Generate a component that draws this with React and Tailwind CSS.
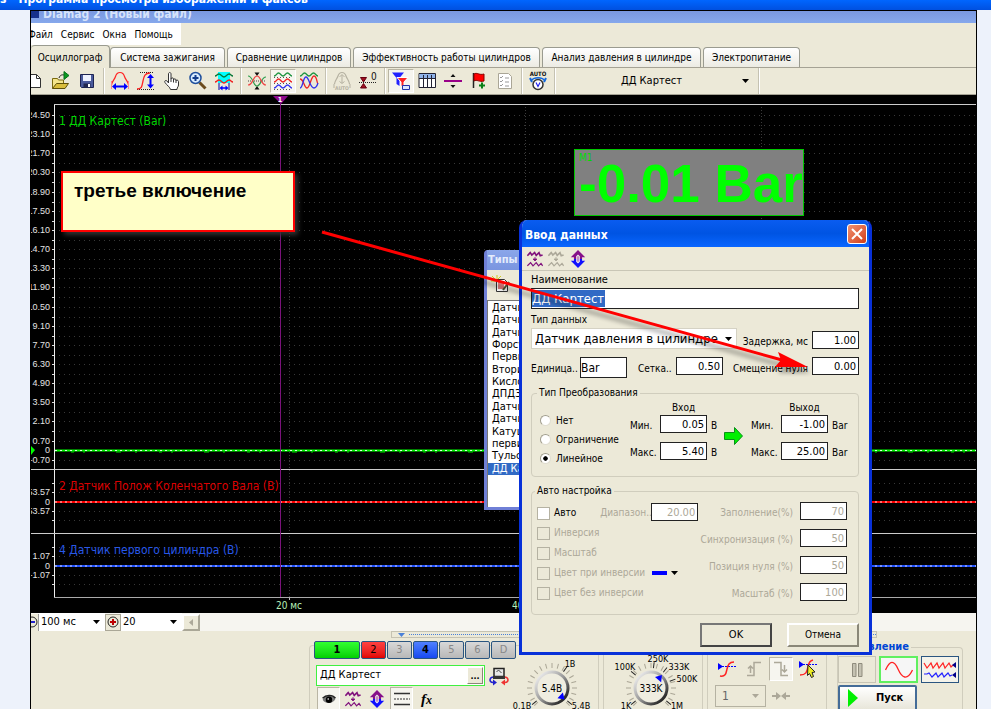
import React from 'react';

const tabs = [
  { label: 'Осциллограф', width: 'w-[79px]', active: true },
  { label: 'Система зажигания', width: 'w-[115px]' },
  { label: 'Сравнение цилиндров', width: 'w-[124px]' },
  { label: 'Эффективность работы цилиндров', width: 'w-[187px]' },
  { label: 'Анализ давления в цилиндре', width: 'w-[159px]' },
  { label: 'Электропитание', width: 'w-[97px]' },
];

const sensorTypes = [
  'Датчик давления',
  'Датчик кислорода',
  'Датчик разрежения',
  'Форсунка',
  'Первичка',
  'Вторичка',
  'Кислород',
  'ДПДЗ',
  'Датчик Холла',
  'Датчик фазы',
  'Катушка',
  'первичка',
  'Тульский',
  'ДД Картест',
];

/* ---------- toolbar drawings ---------- */

const Icon = ({ children, size = 'h-5 w-5' }) => (
  <svg viewBox="0 0 20 20" className={`${size} shrink-0`} fill="none" strokeWidth="1">
    {children}
  </svg>
);

const NewIcon = () => (
  <Icon>
    <path d="M4.5 3.5h7l4 4v9h-11z" fill="#fff" stroke="#333" />
    <path d="M11.5 3.5v4h4" stroke="#333" />
  </Icon>
);

const OpenIcon = () => (
  <Icon>
    <path d="M1.5 17.5v-10h5l1 1.500h5v3" fill="#f3e48c" stroke="#7a6a10" />
    <path d="M1.500 17.500l4-5h12l-3.500 5z" fill="#d9bd3c" stroke="#5d4f08" />
    <path d="M8 7c1-3 3-3.500 5-3" stroke="#222" />
    <path d="M13 0.500v8l5-4z" fill="#0a9a20" stroke="#06701a" />
  </Icon>
);

const SaveIcon = () => (
  <Icon>
    <path d="M3.500 3.500h13v13h-12l-1-1z" fill="#4a5a9c" stroke="#1d2452" />
    <path d="M6 4h8v6H6z" fill="#eef2ff" />
    <path d="M6.500 12.500h7v4h-7z" fill="#20264e" />
    <path d="M11 13h2v3h-2z" fill="#fff" />
  </Icon>
);

const PeriodIcon = () => (
  <Icon>
    <path d="M1.500 14C2 10 4.500 9 5.500 5.500 6.500 2 8 1.500 10 1.500s3.500.5 4.500 4C15.500 9 18 10 18.500 14" stroke="#f22" strokeWidth="1.200" />
    <path d="M1.500 10v8M18.500 10v8" stroke="#f88" />
    <path d="M4 15.500h12" stroke="#00f" strokeWidth="2" />
    <path d="M2 15.500l4-3.500v7zM18 15.500l-4-3.500v7z" fill="#00f" />
  </Icon>
);

const AmplitudeIcon = () => (
  <Icon>
    <path d="M4 1.500h14M1 18.500h17" stroke="#222" strokeDasharray="1 1" />
    <path d="M1 18c5 0 5-3 6-8s2-8 7-8" stroke="#f22" strokeWidth="1.300" />
    <path d="M14.500 5v10" stroke="#00f" strokeWidth="2" />
    <path d="M14.500 3l-3.500 4h7zM14.500 17.500l-3.500-4h7z" fill="#00f" />
  </Icon>
);

const HandIcon = () => (
  <Icon>
    <path d="M6.500 12V3c0-2 2.500-2 2.500 0v5c0-1.500 2.500-1.500 2.500 0v1c0-1.500 2.500-1.500 2.500 0v1c0-1.500 2.500-1 2.500.5V14c0 2-1.500 2-1.500 4.500H8.500C8 16 5 14.500 3 11.500 2 9.500 4 9 5 10z" fill="#fff" stroke="#333" />
    <path d="M9 8v3M11.500 9v2.500M14 10v2" stroke="#333" />
  </Icon>
);

const ZoomIcon = () => (
  <Icon>
    <path d="M11.500 11.500l6 6" stroke="#6b4b1c" strokeWidth="3" />
    <circle cx="7.500" cy="7" r="5.500" fill="#d8ecff" stroke="#1f4f9c" strokeWidth="1.500" />
    <path d="M7.500 4v6M4.500 7h6" stroke="#123c8c" strokeWidth="2" />
  </Icon>
);

const WindowIcon = () => (
  <Icon>
    <path d="M4 1h12v11H4z" fill="#0ff" />
    <path d="M1 5c2 0 2-2 4-2s3 3 5 3 3-3 5-3 2 2 4 2" stroke="#087838" strokeWidth="1.300" />
    <path d="M1 11c2 0 2-2 4-2s3 3 5 3 3-3 5-3 2 2 4 2" stroke="#e22" strokeWidth="1.300" />
    <path d="M5 12v7M15 12v7" stroke="#00a" />
    <path d="M7 17h6" stroke="#00f" strokeWidth="1.500" />
    <path d="M5.500 17l3-2.500v5zM14.500 17l-3-2.500v5z" fill="#00f" />
  </Icon>
);

const MergeIcon = () => (
  <Icon>
    <path d="M10 5L7.500 1.500h5zM10 15l-2.500 3.500h5z" fill="#111" />
    <path d="M1 10h18" stroke="#444" strokeDasharray="1 1" />
    <path d="M1 5c5 0 5 10 9 10s4-9 9-9" stroke="#2b9b4b" strokeWidth="1.200" />
    <path d="M1 14c5 0 5-9 9-9s4 9 9 9" stroke="#e44" strokeWidth="1.200" />
  </Icon>
);

const StackIcon = () => (
  <Icon>
    <path d="M1 6.500h18M1 12.500h18M1 18.500h18" stroke="#555" strokeDasharray="1 2" />
    <path d="M1 5c2.500 0 2.500-3 4.500-3S8 5 10 5s2.500-3 4.500-3S17 5 19 5" stroke="#1c9440" strokeWidth="1.300" />
    <path d="M1 11c2.500 0 2.500-3 4.500-3s2.500 3 4.500 3 2.500-3 4.500-3 2.500 3 4.500 3" stroke="#e22" strokeWidth="1.300" />
    <path d="M1 17c2.500 0 2.500-3 4.500-3s2.500 3 4.500 3 2.500-3 4.500-3 2.500 3 4.500 3" stroke="#33e" strokeWidth="1.300" />
  </Icon>
);

const OverlayIcon = () => (
  <Icon>
    <path d="M1 5c2.500 0 2.500-3 4.500-3S8 5 10 5s2.500-3 4.500-3S17 5 19 5" stroke="#1c9440" strokeWidth="1.300" />
    <path d="M1 8c4 0 4 9 7 9s4-12 7-12 3 8 4 8" stroke="#e22" strokeWidth="1.300" />
    <path d="M1 17c3 0 3-11 6-11s4 11 8 11c2 0 3-2 4-5" stroke="#33e" strokeWidth="1.300" />
  </Icon>
);

const AutoBellIcon = () => (
  <Icon>
    <path d="M2.500 13C3 9 5 8 6 5c.8-2.500 2-3.500 4-3.500s3.200 1 4 3.500c1 3 3 4 3.500 8" stroke="#b5b1a1" strokeWidth="1.200" />
    <path d="M10 4v8M7.500 6L10 3.500 12.500 6M7.500 10.500l2.500 2 2.500-2M2 13v4M18 13v4" stroke="#b5b1a1" />
    <text x="10" y="19" textAnchor="middle" fontSize="5" fontWeight="bold" fill="#b5b1a1">AUTO</text>
  </Icon>
);

const ZeroIcon = () => (
  <Icon>
    <path d="M1 11.500h18" stroke="#222" strokeDasharray="1 1" />
    <path d="M5.500 11L2.500 6.500h6zM5.500 12.500l-3 4.500h6z" fill="#a01020" stroke="#601" />
    <text x="13" y="9" fontSize="10" fill="#111">0</text>
  </Icon>
);

const FilterIcon = () => (
  <Icon>
    <path d="M1 1.500h12L8.500 7v8l-3-2V7z" fill="#22f" />
    <path d="M6 6.500h11l-4 4.500V17l-3-2v-4z" fill="#f22" stroke="#fff" />
    <path d="M11.500 14.500h7v4h-7z" fill="#dde6ff" stroke="#23a" />
  </Icon>
);

const TableIcon = () => (
  <Icon>
    <path d="M2 2.500h16.500v14H2z" fill="#fff" stroke="#223" />
    <path d="M2.500 3h15.500v4H2.500z" fill="#8fb2e8" />
    <path d="M2 7.500h16M6.500 4v12M10.500 4v12M14.500 4v12" stroke="#223" />
  </Icon>
);

const SplitIcon = () => (
  <Icon>
    <path d="M1 10h18" stroke="#908" strokeWidth="2" />
    <path d="M10 3L7.500 6h5zM10 17l-2.500-3h5z" fill="#111" />
  </Icon>
);

const FlagIcon = () => (
  <Icon>
    <path d="M4.500 2v15" stroke="#222" strokeWidth="1.500" />
    <path d="M5 3c3-2 5 1.500 10 0v7c-5 1.500-7-2-10 0z" fill="#f00" stroke="#800" />
    <path d="M13 11.500v6M10 14.500h6" stroke="#088018" strokeWidth="2" />
  </Icon>
);

const ChecklistIcon = () => (
  <Icon>
    <path d="M3.500 2.500h10l3 3v12h-13z" fill="#fff" stroke="#aaa696" />
    <path d="M5 6l1 1 2-2M5 10l1 1 2-2M5 14l1 1 2-2M10 7h4M10 11h4M10 15h4" stroke="#999" />
  </Icon>
);

const AutoClockIcon = () => (
  <Icon>
    <text x="10" y="5" textAnchor="middle" fontSize="6" fontWeight="bold" fill="#111">AUTO</text>
    <path d="M4 9c2-3 10-3 12 0" stroke="#16d" strokeWidth="1.500" />
    <path d="M2 7l2 4M18 7l-2 4" stroke="#16d" strokeWidth="2" />
    <circle cx="10" cy="13.500" r="5" fill="#fff" stroke="#333" strokeWidth="1.500" />
    <path d="M8 11.500l2 4 2-4" stroke="#22e" strokeWidth="1.200" />
  </Icon>
);

const WavesDownIcon = ({ color = '#80107c' }) => (
  <Icon size="h-4 w-4">
    <path d="M0.500 6l3.500-4 2 3 3.500-3 2 3.500L15 2l1.500 4 3-1" stroke={color} strokeWidth="2" />
    <path d="M10 7.500v4M7.500 10h5L10 12.500z" stroke={color} fill={color} />
    <path d="M0.500 18.500l4-4 3 4 4-4 3 4 3-3 2 3" stroke={color} strokeWidth="1.500" />
  </Icon>
);

const UpDownIcon = () => (
  <Icon size="h-[18px] w-[18px]">
    <path d="M10 0l8 8h-3.500v2h-9V8H2z" fill="#86108a" />
    <path d="M10 20l8-8h-3.500v-2h-9v2H2z" fill="#1010ff" />
    <path d="M10 5l2 2v6l-2 2-2-2V7z" fill="#f4f2ea" />
    <path d="M10 7v6" stroke="#86108a" />
  </Icon>
);

const ToolButton = ({ label, pressed, children, width = 'w-[26px]' }) => (
  <button
    type="button"
    aria-label={label}
    className={`flex h-6 ${width} shrink-0 items-center justify-center ${
      pressed ? 'border border-[#b9b5a4] border-r-white border-b-white bg-[#f6f5ef]' : ''
    }`}
  >
    {children}
  </button>
);

const Separator = () => (
  <div className="flex w-[7px] shrink-0 justify-center self-stretch">
    <div className="w-0.5 border-l border-[#c5c2b2] bg-white"></div>
  </div>
);

const Caret = ({ className = 'text-black' }) => (
  <svg viewBox="0 0 7 4" className={`h-1 w-[7px] shrink-0 ${className}`}>
    <path d="M0 0h7L3.500 4z" fill="currentColor" />
  </svg>
);

const Toolbar = () => (
  <div className="flex h-[27px] items-center overflow-hidden border-b border-[#a5a294]">
    <div className="flex w-[17px] shrink-0 justify-end overflow-hidden pr-[3px]">
      <NewIcon />
    </div>
    <ToolButton label="Открыть"><OpenIcon /></ToolButton>
    <ToolButton label="Сохранить"><SaveIcon /></ToolButton>
    <Separator />
    <ToolButton label="Период"><PeriodIcon /></ToolButton>
    <ToolButton label="Амплитуда"><AmplitudeIcon /></ToolButton>
    <ToolButton label="Рука"><HandIcon /></ToolButton>
    <ToolButton label="Увеличить"><ZoomIcon /></ToolButton>
    <ToolButton label="Окно"><WindowIcon /></ToolButton>
    <Separator />
    <ToolButton label="Совместить"><MergeIcon /></ToolButton>
    <ToolButton label="Раздельно" pressed><StackIcon /></ToolButton>
    <ToolButton label="Наложить"><OverlayIcon /></ToolButton>
    <Separator />
    <ToolButton label="Авто масштаб"><AutoBellIcon /></ToolButton>
    <ToolButton label="Ноль"><ZeroIcon /></ToolButton>
    <Separator />
    <ToolButton label="Фильтр" pressed><FilterIcon /></ToolButton>
    <ToolButton label="Таблица"><TableIcon /></ToolButton>
    <ToolButton label="Линия"><SplitIcon /></ToolButton>
    <ToolButton label="Флаг"><FlagIcon /></ToolButton>
    <ToolButton label="Список"><ChecklistIcon /></ToolButton>
    <Separator />
    <ToolButton label="Авто"><AutoClockIcon /></ToolButton>
    <Separator />
    <button type="button" className="flex w-[197px] items-center justify-end gap-[60px] pr-1.5 text-[11px]">
      ДД Картест
      <Caret />
    </button>
    <Separator />
  </div>
);

/* ---------- oscilloscope screen ---------- */

const pressureLabels = [
  '24.50', '23.10', '21.70', '20.30', '18.90', '17.50', '16.10', '14.70', '13.30',
  '11.90', '10.50', '9.10', '7.70', '6.30', '4.90', '3.50', '2.10', '0.70',
];

const pressureScale = pressureLabels.map((label, i) => ({ label, y: Math.round(20 + i * 19.15) }));

const otherScale = [
  { label: '0', y: 355 },
  { label: '-0.70', y: 365 },
  { label: '53.57', y: 397 },
  { label: '0', y: 407 },
  { label: '-53.57', y: 416 },
  { label: '1.07', y: 461 },
  { label: '0', y: 471 },
  { label: '-1.07', y: 480 },
];

const gridRows = [
  ...pressureScale.map((s) => s.y),
  ...pressureScale.slice(0, 17).map((s) => s.y + 10),
  365, 388, 397, 416, 425, 452, 461, 480, 489,
];

const timeMarks = [
  { x: 258, label: '20 мс' },
  { x: 494, label: '40 мс' },
  { x: 730, label: '60 мс' },
];

const Scope = () => (
  <svg className="block h-[518px] w-full shrink-0 bg-black" fontSize="10">
    {gridRows.map((y) => (
      <g key={y}>
        <line x1="28" x2="100%" y1={y + 0.5} y2={y + 0.5} stroke="#383838" strokeDasharray="1 4" />
        <line x1="21" x2="24" y1={y + 0.5} y2={y + 0.5} stroke="#ddd" />
      </g>
    ))}
    {timeMarks.map((m) => (
      <g key={m.x}>
        <line x1={m.x + 0.5} x2={m.x + 0.5} y1="12" y2="502" stroke="#3a3a3a" strokeDasharray="1 2" />
        <line x1={m.x + 0.5} x2={m.x + 0.5} y1="502" y2="505" stroke="#bbb" />
        <text x={m.x} y="514" textAnchor="middle" fill="#b9f0b9">{m.label}</text>
      </g>
    ))}

    {[...pressureScale, ...otherScale].map((s) => (
      <text key={s.y} x="19" y={s.y + 3} textAnchor="end" fill="#e4e4e4" fontFamily="Liberation Sans" fontSize="9">
        {s.label}
      </text>
    ))}

    {/* frame and channel dividers */}
    <path d="M23.500 9v494" stroke="#eee" />
    <line x1="23" x2="100%" y1="9.500" y2="9.500" stroke="#ccc" />
    <line x1="0" x2="100%" y1="374.500" y2="374.500" stroke="#ccc" />
    <line x1="0" x2="100%" y1="438.500" y2="438.500" stroke="#ccc" />
    <line x1="23" x2="100%" y1="502.500" y2="502.500" stroke="#aaa" />

    {/* signals */}
    <line x1="24" x2="100%" y1="355.500" y2="355.500" stroke="#0f0" strokeWidth="2" />
    <line x1="40" x2="100%" y1="357" y2="357" stroke="#0d0" strokeDasharray="3 9 2 31 5 14 2 22" />
    <line x1="24" x2="100%" y1="355.500" y2="355.500" stroke="#dfd" strokeDasharray="2 3" />
    <line x1="24" x2="100%" y1="407" y2="407" stroke="#f00" strokeWidth="2" />
    <line x1="24" x2="100%" y1="407" y2="407" stroke="#fdd" strokeDasharray="2 3" />
    <line x1="24" x2="100%" y1="471" y2="471" stroke="#2050ff" strokeWidth="2" />
    <line x1="24" x2="100%" y1="471" y2="471" stroke="#dde" strokeDasharray="2 3" />
    <path d="M0 351l4 4-4 5z" fill="#0f0" />

    <g fontSize="12">
      <text x="28" y="30" fill="#00d800">1 ДД Картест (Bar)</text>
      <text x="28" y="395" fill="#dc0000">2 Датчик Полож Коленчатого Вала (В)</text>
      <text x="28" y="459" fill="#2858e8">4 Датчик первого цилиндра (В)</text>
    </g>

    {/* cursor */}
    <path d="M249.500 2v500" stroke="#7a127a" />
    <path d="M242 1h15l-7 8z" fill="#8c0a8c" />
    <text x="249" y="7" textAnchor="middle" fontSize="7" fontWeight="bold" fill="#fff">1</text>
  </svg>
);

const Readout = () => (
  <div className="absolute top-[149px] left-[574px] h-[67px] w-[230px] border border-[#00c800] bg-[#808080] text-[#00ff00]">
    <p className="h-3 pl-1 text-[10px] leading-4 text-[#00dc00]">M1</p>
    <p className="pl-1 font-['Liberation_Sans',sans-serif] text-[53px] leading-[44px] font-bold whitespace-nowrap">-0.01 Bar</p>
  </div>
);

const Note = () => (
  <div className="absolute top-[171px] left-[61px] h-[61px] w-[234px] border-2 border-[#ff0000] bg-[#ffffc8] px-[11px] py-1.5 font-['Liberation_Sans',sans-serif] text-[19px] leading-6 font-bold whitespace-nowrap text-black shadow-[3px_3px_5px_#333]">
    третье включение
  </div>
);

const PointerArrow = () => (
  <svg className="pointer-events-none absolute top-[226px] left-[316px] h-[154px] w-[506px]">
    <g transform="translate(3 6)" opacity="0.3" className="blur-[2px]">
      <path d="M6 6l460 128" stroke="#000" strokeWidth="4" />
      <path d="M492 141l-33 0 6-7-3-8z" />
    </g>
    <path d="M6 6l460 128" stroke="#f00" strokeWidth="3" />
    <path d="M492 141l-33 0 6-7-3-8z" fill="#f00" />
  </svg>
);

/* ---------- sensor type list ---------- */

const TypesWindow = () => (
  <section className="absolute top-[250px] left-[484px] w-20 rounded-t border-x-[3px] border-b-[3px] border-[#6f7fd6] bg-[#ece9d8]">
    <h2 className="h-5 bg-linear-to-b from-[#8aa6ea] to-[#7a95e0] pl-px text-[11px] leading-5 font-bold text-[#e4ecfc]">Типы</h2>
    <div className="flex h-[30px] items-center pl-1">
      <Icon>
        <path d="M1 1l3 3M6 0v4M0 6h4M10 1L7 4" stroke="#cc2" />
        <path d="M5.500 4.500h8l3 3v9h-11z" fill="#fff" stroke="#333" />
        <path d="M7 7h6v7H7z" fill="#e58080" />
        <path d="M18 7l-6 8" stroke="#553" strokeWidth="2" />
      </Icon>
    </div>
    <div className="h-[207px] border-t border-l border-[#777] bg-white pt-px">
      <ul className="grid h-[173px] overflow-hidden text-[11px] leading-3 whitespace-nowrap">
        {sensorTypes.map((name, i) => (
          <li key={i} className={i === sensorTypes.length - 1 ? 'bg-[#316ac5] pl-1 text-white' : 'pl-1'}>
            {name}
          </li>
        ))}
      </ul>
    </div>
  </section>
);

/* ---------- data entry dialog ---------- */

const NumberBox = ({ id, value, disabled, className = '' }) => (
  <input
    id={id}
    defaultValue={value}
    disabled={disabled}
    className={`h-[18px] w-[47px] shrink-0 border border-[#222] bg-white pr-0.5 text-right text-[11px] ${
      disabled ? 'text-[#aca899]' : 'text-black'
    } ${className}`}
  />
);

const RangeColumn = ({ id, title, unit, min, max }) => (
  <div className="grid w-[94px] grid-cols-[30px_47px_17px] content-start items-end">
    <span className="col-start-2 h-[15px] text-center leading-[15px]">{title}</span>
    <label htmlFor={`${id}-min`} className="col-start-1">Мин.</label>
    <NumberBox id={`${id}-min`} value={min} />
    <span className="pl-1">{unit}</span>
    <label htmlFor={`${id}-max`} className="mt-[13px]">Макс.</label>
    <NumberBox id={`${id}-max`} value={max} className="mt-[9px]" />
    <span className="pl-1">{unit}</span>
  </div>
);

const CheckRow = ({ label, disabled, children }) => (
  <div className="flex h-5 items-center">
    <label className={`flex items-center gap-1 ${disabled ? 'text-[#aca899]' : ''}`}>
      <input
        type="checkbox"
        disabled={disabled}
        className="h-[13px] w-[13px] appearance-none border border-[#b5b2a2] bg-white disabled:bg-[#ece9d8]"
      />
      {label}
    </label>
    {children}
  </div>
);

const autoFields = [
  { id: 'fill', label: 'Заполнение(%)', value: '70' },
  { id: 'sync', label: 'Синхронизация (%)', value: '50' },
  { id: 'zero', label: 'Позиция нуля (%)', value: '50' },
  { id: 'scale', label: 'Масштаб (%)', value: '100' },
];

const DataDialog = () => (
  <section className="absolute top-[220px] left-[519px] w-[353px] overflow-hidden rounded-t-lg border-x-[3px] border-b-[3px] border-[#0831d9] bg-[#ece9d8] leading-[14px] whitespace-nowrap">
    <header className="flex h-[27px] items-center justify-between bg-linear-to-b from-[#0a5cf0] via-[#0054e3] to-[#0a66ff] pr-0.5 pl-[3px]">
      <h2 className="pt-0.5 text-[12px] font-bold text-white">Ввод данных</h2>
      <button
        type="button"
        aria-label="Закрыть"
        className="flex h-5 w-5 items-center justify-center rounded-[3px] border border-white bg-linear-to-br from-[#f09070] to-[#d03a10]"
      >
        <svg viewBox="0 0 12 12" className="h-3 w-3" stroke="#fff" strokeWidth="2">
          <path d="M1 1l10 10M11 1L1 11" />
        </svg>
      </button>
    </header>
    <div className="flex h-6 items-center gap-[5px] border-b border-[#c9c6b6] pl-[5px]">
      <WavesDownIcon />
      <WavesDownIcon color="#aca899" />
      <UpDownIcon />
    </div>

    <form className="pr-[10px] pb-[5px] pl-[9px]">
      <label htmlFor="name" className="block h-[17px] text-[11px] leading-[18px]">Наименование</label>
      <div className="flex h-[21px] items-center border border-[#222] bg-white">
        <input
          id="name"
          defaultValue="ДД Картест"
          className="h-[17px] w-[73px] bg-[#316ac5] text-[13px] text-white"
        />
      </div>

      <label htmlFor="kind" className="mt-1 block h-[15px]">Тип данных</label>
      <div className="flex h-[21px] items-end">
        <div className="flex h-[21px] w-[206px] items-center border border-[#d5d2c4] bg-white pr-1">
          <select id="kind" className="min-w-0 flex-1 appearance-none pl-[3px] text-[13px]">
            <option>Датчик давления в цилиндре</option>
          </select>
          <Caret />
        </div>
        <label htmlFor="delay" className="flex-1 pr-1 text-right">Задержка, мс</label>
        <NumberBox id="delay" value="1.00" />
      </div>

      <div className="mt-2 flex h-[21px] items-start">
        <label htmlFor="unit" className="w-[49px] pt-[5px]">Единица..</label>
        <input id="unit" defaultValue="Bar" className="h-[21px] w-[47px] border border-[#222] bg-white text-[12px]" />
        <label htmlFor="grid" className="ml-[11px] w-[38px] pt-[5px]">Сетка..</label>
        <NumberBox id="grid" value="0.50" />
        <label htmlFor="offset" className="flex-1 pt-[5px] pr-1 text-right">Смещение нуля</label>
        <NumberBox id="offset" value="0.00" />
      </div>

      <fieldset className="mt-2 h-[91px] min-w-0 rounded border border-[#d0cdbd]">
        <legend className="ml-[5px] px-0.5">Тип Преобразования</legend>
        <div className="flex items-start">
          <div className="w-[98px] pt-[11px] pl-2">
            {['Нет', 'Ограничение', 'Линейное'].map((name) => (
              <label key={name} className="flex h-[19px] items-center gap-[5px]">
                <input
                  type="radio"
                  name="transform"
                  defaultChecked={name === 'Линейное'}
                  className="h-[11px] w-[11px] appearance-none rounded-full border border-[#a09d8d] border-r-[#e0ddd0] border-b-[#e0ddd0] bg-white checked:bg-[radial-gradient(circle,#000_30%,#fff_40%)]"
                />
                {name}
              </label>
            ))}
          </div>
          <RangeColumn id="in" title="Вход" unit="В" min="0.05" max="5.40" />
          <div className="w-[27px] pt-[27px]">
            <svg viewBox="0 0 19 18" className="h-[18px] w-[19px]">
              <path d="M0.500 5.500h10v-5l8 8.500-8 8.500v-5h-10z" fill="#00f000" stroke="#089018" />
            </svg>
          </div>
          <RangeColumn id="out" title="Выход" unit="Bar" min="-1.00" max="25.00" />
        </div>
      </fieldset>

      <fieldset className="mt-[7px] h-[131px] min-w-0 rounded border border-[#d0cdbd]">
        <legend className="ml-[3px] px-0.5">Авто настройка</legend>
        <div className="flex justify-between pt-1 pr-[11px] pl-[5px]">
          <div className="pt-px">
            <CheckRow label="Авто">
              <label htmlFor="range" className="ml-6 w-[51px] text-[#aca899]">Диапазон..</label>
              <NumberBox id="range" value="20.00" disabled className="self-start" />
            </CheckRow>
            <CheckRow label="Инверсия" disabled />
            <CheckRow label="Масштаб" disabled />
            <CheckRow label="Цвет при инверсии" disabled>
              <button type="button" aria-label="Цвет" className="ml-[7px] flex items-center gap-1">
                <span className="h-1 w-[15px] bg-[#0000ff]"></span>
                <Caret />
              </button>
            </CheckRow>
            <CheckRow label="Цвет без инверсии" disabled />
          </div>
          <div className="flex flex-col gap-[9px]">
            {autoFields.map((f) => (
              <div key={f.id} className="flex items-end justify-end gap-[7px]">
                <label htmlFor={f.id} className="text-[#aca899]">{f.label}</label>
                <NumberBox id={f.id} value={f.value} disabled />
              </div>
            ))}
          </div>
        </div>
      </fieldset>

      <div className="mt-2 flex justify-end gap-[15px]">
        <button type="button" className="h-6 w-[72px] border-2 border-[#444] border-t-[#777] border-l-[#777] text-[11px]">OK</button>
        <button type="button" className="h-6 w-[72px] border-2 border-t-white border-r-[#8a8778] border-b-[#8a8778] border-l-white">
          Отмена
        </button>
      </div>
    </form>
  </section>
);

/* ---------- lower control panel ---------- */

const ZoomBar = () => (
  <div className="flex h-[18px] shrink-0 items-center overflow-hidden bg-[#f6f5f0] text-[11px]">
    <button type="button" aria-label="Сжать" className="flex h-[17px] w-2 items-center justify-end border-r border-[#999] bg-[#ece9d8]">
      <svg viewBox="0 0 12 12" className="h-3 w-3 shrink-0" fill="none">
        <circle cx="6" cy="6" r="5" stroke="#222" />
        <path d="M3 6h6" stroke="#22c" strokeWidth="2" />
      </svg>
    </button>
    <button type="button" className="flex h-full w-[66px] items-center justify-between bg-white pr-[5px] pl-0.5">
      100 мс
      <Caret />
    </button>
    <button type="button" aria-label="Растянуть" className="flex h-[17px] w-4 items-center justify-center border border-[#aaa797] bg-[#ece9d8]">
      <svg viewBox="0 0 12 12" className="h-3 w-3 shrink-0" fill="none">
        <circle cx="6" cy="6" r="5" stroke="#222" />
        <path d="M3 6h6M6 3v6" stroke="#b00" strokeWidth="2" />
      </svg>
    </button>
    <button type="button" className="flex h-full w-[61px] items-center justify-between bg-white pr-[5px] pl-0.5">
      20
      <Caret />
    </button>
    <button type="button" aria-label="Влево" className="flex h-[17px] w-[18px] items-center justify-center border-2 border-t-white border-r-[#aaa797] border-b-[#aaa797] border-l-white bg-[#ece9d8]">
      <svg viewBox="0 0 4 7" className="h-[7px] w-1"><path d="M4 0v7L0 3.500z" fill="#aca899" /></svg>
    </button>
  </div>
);

const channels = [
  { name: '1', style: 'w-[46px] bg-linear-to-b from-[#30ff30] to-[#00d000] font-bold text-black' },
  { name: '2', style: 'w-[25px] bg-linear-to-b from-[#ff4040] to-[#e00000] text-black' },
  { name: '3', style: 'w-[25px] bg-linear-to-b from-[#d8d8d8] to-[#b8b8b8] text-[#888]' },
  { name: '4', style: 'w-[25px] bg-linear-to-b from-[#5080ff] to-[#1848f0] font-bold text-black' },
  { name: '5', style: 'w-[25px] bg-linear-to-b from-[#d8d8d8] to-[#b8b8b8] text-[#888]' },
  { name: '6', style: 'w-[25px] bg-linear-to-b from-[#d8d8d8] to-[#b8b8b8] text-[#888]' },
  { name: 'D', style: 'w-[25px] bg-linear-to-b from-[#d8d8d8] to-[#b8b8b8] text-[#888]' },
];

const knobTicks = Array.from({ length: 19 }, (_, i) => 135 + i * 15);

const Knob = ({ cx, value, mark, labels, className }) => {
  const angle = (mark * Math.PI) / 180;
  return (
    <svg className={`h-[50px] shrink-0 overflow-visible ${className}`} fontSize="9">
      <defs>
        <linearGradient id={`ring-${cx}`} x1="0" y1="0" x2="1" y2="1">
          <stop offset="0" stopColor="#fff" />
          <stop offset="0.5" stopColor="#999" />
          <stop offset="1" stopColor="#000" />
        </linearGradient>
      </defs>
      {knobTicks.map((deg) => (
        <path key={deg} d="M20 0h5" stroke="#aaa696" transform={`translate(${cx} 29) rotate(${deg})`} />
      ))}
      {labels.map((l) => (
        <g key={l.text}>
          <path d="M20 0h6" stroke="#222" transform={`translate(${cx} 29) rotate(${l.deg})`} />
          <text x={l.x} y={l.y} textAnchor="middle">{l.text}</text>
        </g>
      ))}
      <circle cx={cx} cy="29" r="16" fill="#efede0" stroke={`url(#ring-${cx})`} strokeWidth="3" />
      <path
        d="M4 0l-6-4v8z"
        fill="#00f"
        transform={`translate(${cx + 13 * Math.cos(angle)} ${29 + 13 * Math.sin(angle)}) rotate(${mark})`}
      />
      <text x={cx} y="33" textAnchor="middle" fontSize="10">{value}</text>
    </svg>
  );
};

const ChannelPanel = () => (
  <div className="w-[290px] shrink-0 rounded-t border border-b-0 border-[#d0cdbd] pl-1">
    <div className="-mt-[5px] flex gap-px">
      {channels.map((c) => (
        <button
          key={c.name}
          type="button"
          className={`h-[18px] rounded-[2px] border border-[#2a5580] text-[11px] leading-4 ${c.style}`}
        >
          {c.name}
        </button>
      ))}
    </div>
    <div className="flex">
      <div className="w-[196px]">
        <div className="mt-1.5 ml-0.5 flex items-center gap-1">
          <div className="flex h-[21px] w-[169px] items-center border border-[#40f040] bg-white p-px">
            <input aria-label="Датчик" defaultValue="ДД Картест" className="min-w-0 flex-1 pl-0.5 text-[11px]" />
            <button type="button" className="h-full w-4 border border-t-white border-r-[#8a8778] border-b-[#8a8778] border-l-white bg-[#ece9d8] text-[9px] leading-3 font-bold">...</button>
          </div>
          <Icon>
            <path d="M5 2.500h10v8H5z" fill="#e8e8e8" stroke="#222" strokeWidth="1.500" />
            <path d="M4 10h12v3H4z" fill="#333" />
            <path d="M7.500 6l2-2 3 3" stroke="#444" />
            <path d="M4 11c-4 1-4 5 0 5.500" stroke="#22c" strokeWidth="1.500" />
            <path d="M4 13.500l4 3-4 3z" fill="#22c" />
            <path d="M16 11c4 1 4 5 0 5.500" stroke="#e33" strokeWidth="1.500" />
            <path d="M16 13.500l-4 3 4 3z" fill="#e33" />
          </Icon>
        </div>
        <div className="mt-px ml-[3px] flex items-center gap-0.5">
          <ToolButton label="Показать" pressed width="w-[23px]">
            <Icon size="h-4 w-4">
              <path d="M2 11c4-6 12-6 16-1-3 6-12 7-16 1z" fill="#777" />
              <path d="M2 9c4-4 12-5 16 0" stroke="#222" strokeWidth="2" />
              <circle cx="10" cy="11" r="4" fill="#000" />
              <circle cx="9" cy="10" r="1" fill="#fff" />
            </Icon>
          </ToolButton>
          <ToolButton label="Фильтр канала" width="w-[22px]"><WavesDownIcon /></ToolButton>
          <ToolButton label="Инверсия канала" width="w-[22px]"><UpDownIcon /></ToolButton>
          <ToolButton label="Линии" pressed width="w-[23px]">
            <Icon>
              <path d="M2 4.500h16M2 15.500h16" stroke="#333" strokeWidth="1.500" />
              <path d="M2 10h16" stroke="#333" strokeDasharray="2 1" />
            </Icon>
          </ToolButton>
          <ToolButton label="Функция" width="w-[23px]">
            <span className="font-['Liberation_Serif',serif] text-[15px] font-bold italic">f<span className="text-[12px]">x</span></span>
          </ToolButton>
        </div>
      </div>
      <Knob
        className="w-[88px]"
        cx={42}
        value="5.4В"
        mark={42}
        labels={[
          { text: '0.1В', x: 12, y: 50, deg: 140 },
          { text: '1В', x: 60, y: 8, deg: 305 },
          { text: '5.4В', x: 71, y: 50, deg: 40 },
        ]}
      />
    </div>
  </div>
);

const TriggerPanel = () => (
  <div className="w-[120px] shrink-0 rounded-t border border-b-0 border-[#d0cdbd] pt-[11px] pl-[7px]">
    <div className="flex items-center gap-[3px]">
      <ToolButton label="Запуск" width="w-[24px]">
        <Icon>
          <path d="M2 7.500h17" stroke="#00f" strokeDasharray="2 1" />
          <path d="M1 4v7l5-3.500z" fill="#00f" />
          <path d="M3 17c6 1 6-3 7-7s2-7 7-7" stroke="#f22" strokeWidth="1.500" />
        </Icon>
      </ToolButton>
      <ToolButton label="Фронт" width="w-[24px]">
        <Icon><path d="M3 16.500h7v-13h7M6.500 14V7M4 9.500L6.500 7 9 9.500" stroke="#aca899" strokeWidth="1.500" /></Icon>
      </ToolButton>
      <ToolButton label="Спад" pressed width="w-[24px]">
        <Icon><path d="M3 3.500h7v13h7M13.500 6v7M11 10.500l2.500 2.500 2.500-2.500" stroke="#aca899" strokeWidth="1.500" /></Icon>
      </ToolButton>
      <ToolButton label="Выбор" width="w-[24px]">
        <Icon>
          <path d="M2 5.500h17" stroke="#00f" strokeDasharray="2 1" />
          <path d="M1 2v7l5-3.500z" fill="#00f" />
          <path d="M2 16c6 0 7-3 8-8s2-6 5-7" stroke="#f22" strokeWidth="1.500" />
          <path d="M10 6l7 7-3 .5 1.500 4-2 1-2-4-2 2z" fill="#ee2" stroke="#222" />
        </Icon>
      </ToolButton>
    </div>
    <div className="mt-1 flex items-center gap-1.5">
      <button type="button" className="flex h-[22px] w-[51px] items-center justify-between border border-[#b5b2a2] px-1.5 text-[12px] text-[#666]">
        1
        <Caret className="text-[#aca899]" />
      </button>
      <svg viewBox="0 0 18 8" className="h-2 w-[18px]" fill="#aca899">
        <path d="M0 3h4V0l5 4-5 4V5H0zM18 3h-4V0L9 4l5 4V5h4z" />
      </svg>
    </div>
  </div>
);

const RunPanel = () => (
  <fieldset className="-mt-[5px] ml-1.5 w-[125px] shrink-0 rounded-t border border-b-0 border-[#d0cdbd]">
    <legend className="mr-[51px] ml-auto px-0.5 text-[11px] leading-[14px] font-bold text-[#0046d5]">Управление</legend>
    <div className="mt-0.5 flex gap-[3px]">
      <button type="button" aria-label="Пауза" className="flex h-[27px] w-[38px] items-center justify-center border border-[#c8c5b5]">
        <svg viewBox="0 0 11 14" className="h-[14px] w-[11px]" fill="#c5c2b2" stroke="#8f8c7d">
          <path d="M0.500 0.500h3.500v13h-3.500zM6.500 0.500h3.500v13h-3.500z" />
        </svg>
      </button>
      <button type="button" aria-label="Синус" className="flex h-[27px] w-[39px] items-center justify-center border-2 border-[#60f060] bg-[#f6f6f6]">
        <svg viewBox="0 0 28 20" className="h-5 w-7" fill="none" stroke="#f22" strokeWidth="1.300">
          <path d="M0.500 10C5 0 9 0 13 9s9 12 14.500 1" />
        </svg>
      </button>
      <button type="button" aria-label="Запись" className="flex h-[27px] w-[38px] items-center justify-center border border-[#2a5580] bg-[#f4f3ea]">
        <svg viewBox="0 0 34 20" className="h-5 w-[34px]" fill="none" strokeWidth="1.200">
          <path d="M1 3l3 5 4-5 2 5 4-5 2 5 4-5 2 5 4-5 2 4 2-2" stroke="#f22" />
          <path d="M1 14l3 0 2-1 3 4 4-4 2 4 4-4 2 4 4-4 2 3 2-1" stroke="#22f" />
          <path d="M33 2v6l-4-3zM33 12v6l-4-3z" fill="#008" />
        </svg>
      </button>
    </div>
    <button type="button" className="mt-0.5 flex h-[26px] w-[79px] items-center gap-[18px] rounded-[2px] border-2 border-[#446c98] bg-linear-to-b from-white to-[#e8e6da] pl-2 text-[11px] font-bold">
      <svg viewBox="0 0 10 18" className="h-[18px] w-[10px]"><path d="M0 0v18l10-9z" fill="#00f000" /></svg>
      Пуск
    </button>
  </fieldset>
);

const ControlPanel = () => (
  <div className="flex-1 overflow-hidden pl-[278px]">
    <div className="ml-[82px] flex h-[7px] w-[486px] items-center gap-1 border border-[#c5c2b2] pl-1.5">
      <Caret className="text-[#4a80d8]" />
      <div className="flex-1 border-t border-dotted border-[#4a80d8]"></div>
    </div>
    <div className="mt-[7px] flex gap-1">
      <ChannelPanel />
      <div className="w-[100px] shrink-0 rounded-t border border-b-0 border-[#d0cdbd] pt-[13px]">
        <Knob
          className="w-[98px]"
          cx={47}
          value="333K"
          mark={310}
          labels={[
            { text: '1K', x: 22, y: 50, deg: 140 },
            { text: '100K', x: 21, y: 11, deg: 220 },
            { text: '250K', x: 54, y: 3, deg: 277 },
            { text: '333K', x: 75, y: 11, deg: 308 },
            { text: '500K', x: 83, y: 23, deg: 340 },
            { text: '1M', x: 73, y: 50, deg: 40 },
          ]}
        />
      </div>
      <TriggerPanel />
      <RunPanel />
    </div>
  </div>
);

const App = () => (
  <div className="relative flex h-screen flex-col overflow-hidden bg-[#edf2fb] font-['DejaVu_Sans_Condensed','DejaVu_Sans',sans-serif] text-[10px] text-black">
    <div className="flex h-[10px] shrink-0 items-end overflow-hidden bg-linear-to-b from-[#0066ff] to-[#0050e0] pb-[3px] text-[12px] leading-4 font-bold whitespace-pre text-white">
      s - Программа просмотра изображений и факсов
    </div>

    <main className="mr-[14px] ml-[30px] flex min-h-0 flex-1 flex-col border border-b-0 border-black bg-[#ece9d8] whitespace-nowrap">
      <div className="flex h-3 shrink-0 items-end gap-1 overflow-hidden bg-linear-to-b from-[#7a98e0] to-[#86a8ec] pb-px text-[12px] leading-4 font-bold text-[#d5e2fa]">
        <span className="mb-1 h-4 w-2 bg-[#16308c]"></span>
        Diamag 2 (Новый файл)
      </div>
      <nav className="flex h-[22px] w-[150px] shrink-0 items-center gap-2 overflow-hidden bg-white">
        {['Файл', 'Сервис', 'Окна', 'Помощь'].map((item, i) => (
          <button key={item} type="button" className={i === 0 ? '-ml-[3px]' : ''}>{item}</button>
        ))}
      </nav>
      <div className="flex h-[23px] shrink-0 items-end gap-0.5 border-b border-[#a5a294]">
        {tabs.map((tab) => (
          <button
            key={tab.label}
            type="button"
            className={`shrink-0 overflow-hidden rounded-t border border-b-0 border-[#9a9b90] ${tab.width} ${
              tab.active ? '-mr-0.5 -mb-px h-[23px] border-l-0 bg-[#ece9d8]' : 'h-5 bg-linear-to-b from-white to-[#ecebe3]'
            }`}
          >
            {tab.label}
          </button>
        ))}
      </div>
      <Toolbar />
      <Scope />
      <ZoomBar />
      <ControlPanel />
    </main>

    <Readout />
    <Note />
    <TypesWindow />
    <DataDialog />
    <PointerArrow />
  </div>
);

export default App;
